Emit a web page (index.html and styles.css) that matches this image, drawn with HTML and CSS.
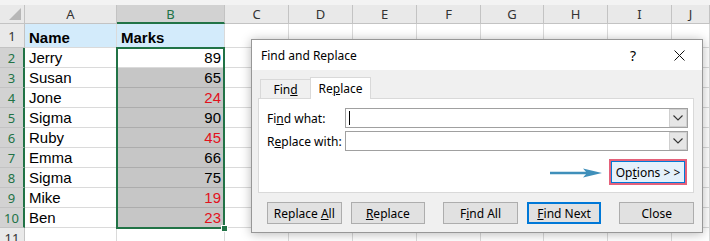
FILE: index.html
```html
<!DOCTYPE html>
<html>
<head>
<meta charset="utf-8">
<link rel="stylesheet" href="styles.css">
</head>
<body>
<div class="sheet">
  <div class="corner"><span class="tri"></span></div>
  <div class="ch">A</div><div class="ch sel">B</div><div class="ch">C</div><div class="ch">D</div><div class="ch">E</div><div class="ch">F</div><div class="ch">G</div><div class="ch">H</div><div class="ch">I</div><div class="ch">J</div>

  <div class="rh">1</div><div class="c hd">Name</div><div class="c hd">Marks</div><div class="c"></div><div class="c"></div><div class="c"></div><div class="c"></div><div class="c"></div><div class="c"></div><div class="c"></div><div class="c"></div>
  <div class="rh sel">2</div><div class="c">Jerry</div><div class="c n">89</div><div class="c"></div><div class="c"></div><div class="c"></div><div class="c"></div><div class="c"></div><div class="c"></div><div class="c"></div><div class="c"></div>
  <div class="rh sel">3</div><div class="c">Susan</div><div class="c n g">65</div><div class="c"></div><div class="c"></div><div class="c"></div><div class="c"></div><div class="c"></div><div class="c"></div><div class="c"></div><div class="c"></div>
  <div class="rh sel">4</div><div class="c">Jone</div><div class="c n g r">24</div><div class="c"></div><div class="c"></div><div class="c"></div><div class="c"></div><div class="c"></div><div class="c"></div><div class="c"></div><div class="c"></div>
  <div class="rh sel">5</div><div class="c">Sigma</div><div class="c n g">90</div><div class="c"></div><div class="c"></div><div class="c"></div><div class="c"></div><div class="c"></div><div class="c"></div><div class="c"></div><div class="c"></div>
  <div class="rh sel">6</div><div class="c">Ruby</div><div class="c n g r">45</div><div class="c"></div><div class="c"></div><div class="c"></div><div class="c"></div><div class="c"></div><div class="c"></div><div class="c"></div><div class="c"></div>
  <div class="rh sel">7</div><div class="c">Emma</div><div class="c n g">66</div><div class="c"></div><div class="c"></div><div class="c"></div><div class="c"></div><div class="c"></div><div class="c"></div><div class="c"></div><div class="c"></div>
  <div class="rh sel">8</div><div class="c">Sigma</div><div class="c n g">75</div><div class="c"></div><div class="c"></div><div class="c"></div><div class="c"></div><div class="c"></div><div class="c"></div><div class="c"></div><div class="c"></div>
  <div class="rh sel">9</div><div class="c">Mike</div><div class="c n g r">19</div><div class="c"></div><div class="c"></div><div class="c"></div><div class="c"></div><div class="c"></div><div class="c"></div><div class="c"></div><div class="c"></div>
  <div class="rh sel">10</div><div class="c">Ben</div><div class="c n g r">23</div><div class="c"></div><div class="c"></div><div class="c"></div><div class="c"></div><div class="c"></div><div class="c"></div><div class="c"></div><div class="c"></div>
  <div class="rh">11</div><div class="c"></div><div class="c"></div><div class="c"></div><div class="c"></div><div class="c"></div><div class="c"></div><div class="c"></div><div class="c"></div><div class="c"></div><div class="c"></div>
</div>

<div class="selbox"><span class="handle"></span></div>

<div class="dlg">
  <div class="dtitle">
    <span class="ttext">Find and Replace</span>
    <span class="tbtn help">?</span>
    <span class="tbtn close"><svg width="11" height="11" viewBox="0 0 11 11"><path d="M0.5 0.5 L10.5 10.5 M10.5 0.5 L0.5 10.5" stroke="#111" stroke-width="1" fill="none"/></svg></span>
  </div>
  <div class="dbody">
    <div class="tabs">
      <div class="tab"><span>Fin<u>d</u></span></div>
      <div class="tab active"><span>Re<u>p</u>lace</span></div>
    </div>
    <div class="panel">
      <div class="field">
        <span class="lbl">Fi<u>n</u>d what:</span>
        <div class="combo"><span class="caret"></span><span class="drop"><svg width="10" height="6" viewBox="0 0 10 6"><polyline points="0.5,0.5 5,5 9.5,0.5" fill="none" stroke="#333" stroke-width="1.1"/></svg></span></div>
      </div>
      <div class="field">
        <span class="lbl">R<u>e</u>place with:</span>
        <div class="combo"><span></span><span class="drop"><svg width="10" height="6" viewBox="0 0 10 6"><polyline points="0.5,0.5 5,5 9.5,0.5" fill="none" stroke="#333" stroke-width="1.1"/></svg></span></div>
      </div>
      <div class="optrow">
        <svg class="arrow" width="52" height="12" viewBox="0 0 52 12"><line x1="0" y1="6" x2="40" y2="6" stroke="#3f8fba" stroke-width="2.4"/><polygon points="33,1.5 52,6 33,10.5 37,6" fill="#3f8fba"/></svg>
        <div class="hl"><span class="btn opt"><span>Op<u>t</u>ions &gt; &gt;</span></span></div>
      </div>
    </div>
    <div class="btns">
      <span class="btn"><span>Replace <u>A</u>ll</span></span>
      <span class="btn"><span><u>R</u>eplace</span></span>
      <span class="btn gap"><span>F<u>i</u>nd All</span></span>
      <span class="btn def"><span><u>F</u>ind Next</span></span>
      <span class="btn gap"><span>Close</span></span>
    </div>
  </div>
</div>
</body>
</html>
```

FILE: styles.css
```css
* { box-sizing: border-box; }
html, body { margin: 0; }
body {
  width: 710px;
  height: 241px;
  overflow: hidden;
  background: #fff;
  position: relative;
}

/* ---------- spreadsheet ---------- */
.sheet {
  display: grid;
  grid-template-columns: 25px 92px 108px 64px 64px 64px 64px 63px 64px 64px 38px;
  grid-template-rows: 19px 24px repeat(10, 20px);
  padding-top: 5px;
  background: #f3f3f3;
  font-family: "Liberation Sans", Arial, sans-serif;
  font-size: 15px;
  color: #000;
}
.corner, .ch, .rh {
  background: #e9e9e9;
  border-right: 1px solid #c3c3c3;
  border-bottom: 1px solid #c3c3c3;
  font-family: "Noto Sans", sans-serif;
  font-size: 13px;
  color: #333;
  display: flex;
  align-items: center;
  justify-content: center;
}
.corner {
  align-items: flex-end;
  justify-content: flex-end;
  padding: 0 3px 3px 0;
}
.tri {
  width: 12px;
  height: 12px;
  background: #b7b7b7;
  clip-path: polygon(100% 0, 100% 100%, 0 100%);
}
.ch.sel {
  background: #d2d2d2;
  color: #217346;
  border-bottom: 2px solid #217346;
}
.rh.sel {
  background: #d2d2d2;
  color: #217346;
  border-right: 2px solid #217346;
}
.c {
  background: #fff;
  border-right: 1px solid #dadada;
  border-bottom: 1px solid #dadada;
  display: flex;
  align-items: flex-end;
  padding: 0 3px 0 4px;
  line-height: 19px;
  white-space: nowrap;
}
.c.hd {
  background: #d3ebfb;
  font-weight: bold;
}
.c.n { justify-content: flex-end; }
.c.g { background: #c6c6c6; border-bottom-color: #acacac; }
.c.r { color: #e2111c; }

.selbox {
  position: absolute;
  left: 116px;
  top: 47px;
  width: 109px;
  height: 182px;
  border: 2px solid #217346;
}
.handle {
  position: absolute;
  right: -5px;
  bottom: -5px;
  width: 7px;
  height: 7px;
  background: #217346;
  border: 1px solid #fff;
}

/* ---------- dialog ---------- */
.dlg {
  position: absolute;
  left: 251px;
  top: 39px;
  width: 452px;
  height: 194px;
  background: #f0f0f0;
  border: 1px solid #979797;
  box-shadow: 0 1px 10px rgba(0, 0, 0, 0.28);
  font-family: "Noto Sans", sans-serif;
  font-size: 12px;
  color: #000;
  display: flex;
  flex-direction: column;
}
.dtitle {
  height: 30px;
  flex: none;
  background: #fff;
  display: flex;
  align-items: center;
  padding-left: 9px;
}
.ttext { flex: 1; }
.tbtn {
  width: 46px;
  height: 30px;
  display: flex;
  align-items: center;
  justify-content: center;
}
.help { font-size: 14px; }
.dbody {
  flex: 1;
  padding: 7px 8px 0 6px;
}
.tabs {
  height: 22px;
  display: flex;
  align-items: flex-end;
  padding-left: 2px;
}
.tab {
  height: 19px;
  width: 51px;
  margin-bottom: 1px;
  border: 1px solid #d9d9d9;
  border-bottom: none;
  background: #f0f0f0;
  display: flex;
  align-items: center;
  justify-content: center;
  padding-top: 1px;
}
.tab.active {
  height: 22px;
  width: 61px;
  margin-bottom: 0;
  margin-left: -1px;
  background: #fff;
  position: relative;
  z-index: 1;
  padding-top: 0;
}
.panel {
  margin-top: -1px;
  height: 95px;
  background: #fff;
  border: 1px solid #d9d9d9;
  padding: 9px 5px 0 8px;
  display: flex;
  flex-direction: column;
  gap: 3px;
}
.field {
  display: flex;
  align-items: center;
  height: 20px;
}
.lbl { width: 78px; }
.combo {
  width: 343px;
  height: 20px;
  border: 1px solid #a0a0a0;
  background: #fff;
  display: flex;
  justify-content: space-between;
  align-items: center;
}
.caret {
  width: 1px;
  height: 14px;
  margin-left: 3px;
  background: #000;
}
.drop {
  width: 18px;
  height: 18px;
  background: #e6e6e6;
  border: 1px solid #cfcfcf;
  display: flex;
  align-items: center;
  justify-content: center;
}
.optrow {
  margin-top: 5px;
  display: flex;
  justify-content: flex-end;
  align-items: center;
  padding-right: 1px;
}
.arrow { margin-right: 7px; margin-top: 1px; }
.hl {
  width: 78px;
  height: 26px;
  border: 2px solid #e5617a;
}
.btn {
  width: 75px;
  height: 22px;
  background: #e1e1e1;
  border: 1px solid #adadad;
  display: flex;
  align-items: center;
  justify-content: center;
  white-space: nowrap;
}
.btn.opt {
  width: 74px;
  background: #e5f1fb;
  border-color: #0078d7;
}
.btn.def { border: 2px solid #0078d7; }
.btns {
  display: flex;
  margin-top: 9px;
  padding-left: 9px;
  gap: 9px;
}
.btns .gap { margin-left: 9px; }
```
